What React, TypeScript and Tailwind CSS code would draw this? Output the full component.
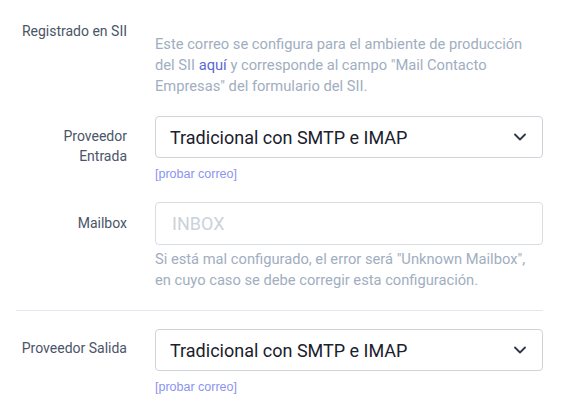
const Chevron = () => (
  <svg width="12" height="8" viewBox="0 0 12 8" fill="none" className="shrink-0">
    <path d="M1 1.5l5 5 5-5" stroke="#2d3748" strokeWidth="1.8" strokeLinecap="round" strokeLinejoin="round" />
  </svg>
)

function SelectBox({ value }: { value: string }) {
  return (
    <div className="flex h-[42px] items-center justify-between rounded border border-[#cfd4db] bg-white pl-[14px] pr-[16px]">
      <span className="text-[18px] text-[#1a202c]">{value}</span>
      <Chevron />
    </div>
  )
}

function TestLink() {
  return (
    <div className="mt-[9px] text-[12.5px] leading-[14px] text-[#8a94f0] [font-family:'Liberation_Sans',Arial,sans-serif]">
      [probar correo]
    </div>
  )
}

export default function App() {
  return (
    <div className="min-h-screen bg-white pl-4 pr-[23px] pt-[21px] [font-family:Roboto,'Noto_Sans',sans-serif]">
      <div className="flex">
        <div className="w-[111px] shrink-0 text-right text-[14px] leading-5 text-[#4a5568]">Registrado en SII</div>
        <div className="ml-7 flex-1 pt-[13px] text-[14.7px] leading-[21px] text-[#a0aec0]">
          Este correo se configura para el ambiente de producción del SII{' '}
          <a className="text-[#5a67d8]">aquí</a> y corresponde al campo "Mail Contacto Empresas" del formulario del SII.
        </div>
      </div>

      <div className="mt-[19px] flex">
        <div className="w-[111px] shrink-0 pt-[10px] text-right text-[14px] leading-5 text-[#4a5568]">
          Proveedor Entrada
        </div>
        <div className="ml-7 flex-1">
          <SelectBox value="Tradicional con SMTP e IMAP" />
          <TestLink />
        </div>
      </div>

      <div className="mt-[21px] flex">
        <div className="w-[111px] shrink-0 pt-[11px] text-right text-[14px] leading-5 text-[#4a5568]">Mailbox</div>
        <div className="ml-7 flex-1">
          <div className="flex h-[43px] items-center rounded border border-[#d9dee5] bg-white pl-4">
            <span className="text-[18px] text-[#cbd2da]">INBOX</span>
          </div>
          <div className="mt-[4px] text-[14.7px] leading-[21px] text-[#a0aec0]">
            Si está mal configurado, el error será "Unknown Mailbox", en cuyo caso se debe corregir esta configuración.
          </div>
        </div>
      </div>

      <div className="mt-[19px] border-t border-[#e2e8f0]" />

      <div className="mt-[18px] flex">
        <div className="w-[111px] shrink-0 pt-[9px] text-right text-[14px] leading-5 text-[#4a5568]">Proveedor Salida</div>
        <div className="ml-7 flex-1">
          <SelectBox value="Tradicional con SMTP e IMAP" />
          <TestLink />
        </div>
      </div>
    </div>
  )
}
